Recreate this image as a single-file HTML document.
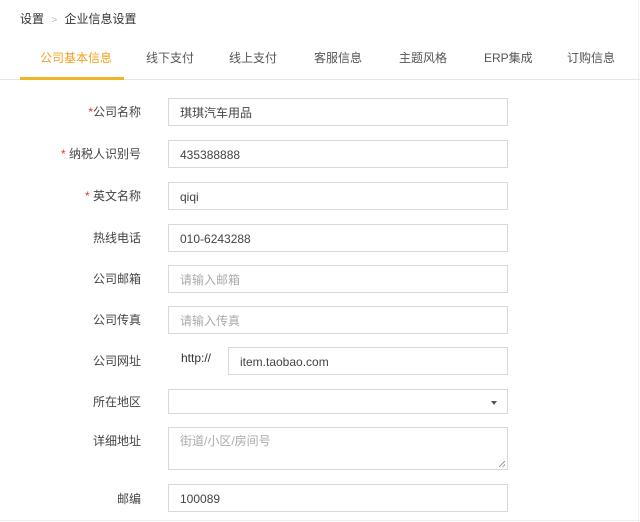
<!DOCTYPE html>
<html><head><meta charset="utf-8"><style>
body{margin:0;width:640px;height:522px;background:#fff;font-family:"Liberation Sans","Noto Sans CJK SC",sans-serif;font-size:12px;color:#333;position:relative;overflow:hidden}
.a{position:absolute}
.lb{position:absolute;right:499px;width:120px;text-align:right;color:#444}
.lb b{color:#e33;font-weight:normal}
.in{position:absolute;left:168px;width:340px;height:28px;border:1px solid #d9d9d9;box-sizing:border-box;padding-left:11px;line-height:28px;color:#444}
.ph{color:#aaa}
.tab{position:absolute;top:49px;color:#555}
</style></head><body>
<div class="a" style="left:20px;top:10px;color:#333">设置 <span style="color:#bbb;font-size:10px;margin:0 4px">&gt;</span> 企业信息设置</div>
<div class="a" style="left:0;top:79px;width:640px;height:1px;background:#e6e6e6"></div>
<div class="a" style="left:20px;top:77px;width:104px;height:3px;background:#f0b429"></div>
<div class="tab" style="left:40px;color:#f0a020">公司基本信息</div>
<div class="tab" style="left:146px">线下支付</div>
<div class="tab" style="left:229px">线上支付</div>
<div class="tab" style="left:314px">客服信息</div>
<div class="tab" style="left:399px">主题风格</div>
<div class="tab" style="left:484px">ERP集成</div>
<div class="tab" style="left:567px">订购信息</div>
<div class="a" style="left:638px;top:0;width:1px;height:522px;background:#eee"></div>
<div class="a" style="left:0;top:520px;width:640px;height:1px;background:#eee"></div>

<div class="lb" style="top:103px"><b>*</b>公司名称</div><div class="in" style="top:98px">琪琪汽车用品</div>
<div class="lb" style="top:145px"><b>* </b>纳税人识别号</div><div class="in" style="top:140px">435388888</div>
<div class="lb" style="top:187px"><b>* </b>英文名称</div><div class="in" style="top:182px">qiqi</div>
<div class="lb" style="top:229px">热线电话</div><div class="in" style="top:224px">010-6243288</div>
<div class="lb" style="top:270px">公司邮箱</div><div class="in ph" style="top:265px">请输入邮箱</div>
<div class="lb" style="top:311px">公司传真</div><div class="in ph" style="top:306px">请输入传真</div>
<div class="lb" style="top:352px">公司网址</div>
<div class="a" style="left:181px;top:351px;color:#333">http://</div>
<div class="in" style="top:347px;left:228px;width:280px">item.taobao.com</div>
<div class="lb" style="top:393px">所在地区</div><div class="in" style="top:389px;height:25px"><span class="a" style="right:10px;top:11px;width:0;height:0;border-left:3px solid transparent;border-right:3px solid transparent;border-top:4px solid #555"></span></div>
<div class="lb" style="top:432px">详细地址</div><div class="in ph" style="top:427px;height:43px;line-height:26px">街道/小区/房间号<span class="a" style="right:2px;bottom:2px;width:6px;height:6px;background:linear-gradient(135deg,transparent 45%,#999 45%,#999 55%,transparent 55%,transparent 75%,#999 75%,#999 85%,transparent 85%)"></span></div>
<div class="lb" style="top:490px">邮编</div><div class="in" style="top:484px">100089</div>
</body></html>
